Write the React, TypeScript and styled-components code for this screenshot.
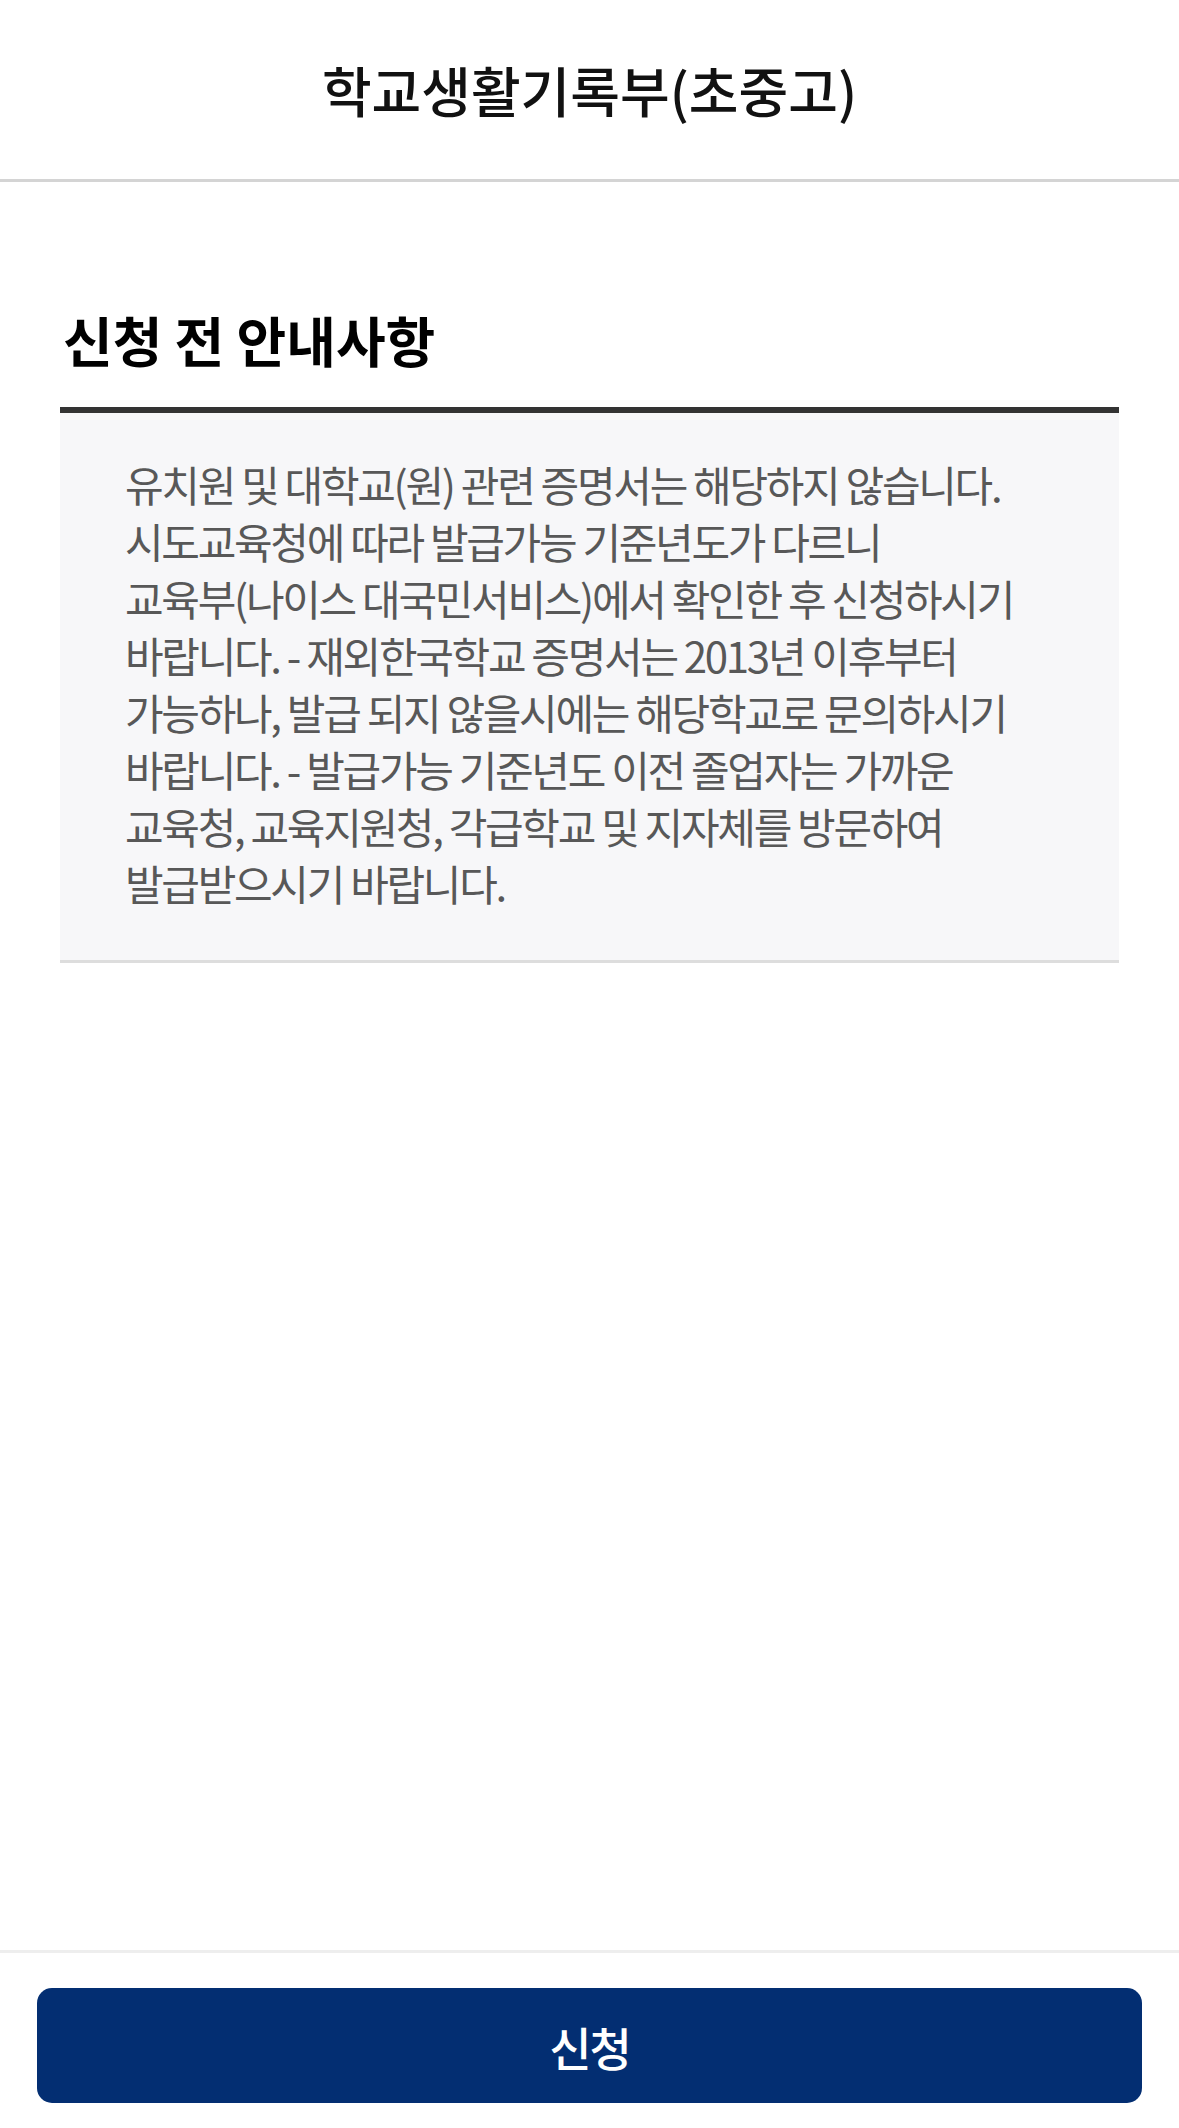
import React from 'react'
import styled, { createGlobalStyle } from 'styled-components'

const GlobalStyle = createGlobalStyle`
  html, body {
    margin: 0;
    padding: 0;
    background: #ffffff;
  }
  body {
    font-family: 'Noto Sans CJK KR', 'Noto Sans', sans-serif;
    color: #111111;
  }
  * {
    box-sizing: border-box;
  }
`

const Page = styled.div`
  min-height: 100vh;
  display: flex;
  flex-direction: column;
`

const Header = styled.header`
  height: 182px;
  display: flex;
  align-items: center;
  justify-content: center;
  border-bottom: 3px solid #d4d4d4;
`

const HeaderTitle = styled.h1`
  margin: 0;
  font-size: 54px;
  font-weight: 500;
  color: #111111;
`

const Content = styled.main`
  flex: 1;
  padding: 120px 60px 0;
`

const SectionTitle = styled.h2`
  margin: 0 0 29px 3px;
  font-size: 54px;
  line-height: 76px;
  font-weight: 700;
  color: #000000;
  letter-spacing: 0;
`

const NoticeBox = styled.div`
  border-top: 6px solid #333333;
  border-bottom: 3px solid #dddddd;
  background: #f7f7f9;
  padding: 42px 64px 49px 65px;
`

const NoticeText = styled.p`
  margin: 0;
  font-size: 42px;
  line-height: 57px;
  color: #585858;
  letter-spacing: -2.3px;
  word-break: keep-all;
`

const Footer = styled.footer`
  border-top: 3px solid #eeeeee;
  padding: 35px 37px 25px;
`

const SubmitButton = styled.button`
  width: 100%;
  height: 115px;
  border: none;
  border-radius: 15px;
  background: #032e72;
  color: #ffffff;
  font-family: inherit;
  font-size: 46px;
  font-weight: 500;
  letter-spacing: -2px;
  cursor: pointer;
`

// word joiner keeps "교육부(나이스" together when the line wraps
const WJ = '\u2060'

const notice = `유치원 및 대학교${WJ}(원) 관련 증명서는 해당하지 않습니다. 시도교육청에 따라 발급가능 기준년도가 다르니 교육부${WJ}(나이스 대국민서비스)에서 확인한 후 신청하시기 바랍니다. - 재외한국학교 증명서는 2013년 이후부터 가능하나, 발급 되지 않을시에는 해당학교로 문의하시기 바랍니다. - 발급가능 기준년도 이전 졸업자는 가까운 교육청, 교육지원청, 각급학교 및 지자체를 방문하여 발급받으시기 바랍니다.`

const App: React.FC = () => {
  return (
    <>
      <GlobalStyle />
      <Page>
        <Header>
          <HeaderTitle>학교생활기록부(초중고)</HeaderTitle>
        </Header>
        <Content>
          <SectionTitle>신청 전 안내사항</SectionTitle>
          <NoticeBox>
            <NoticeText>{notice}</NoticeText>
          </NoticeBox>
        </Content>
        <Footer>
          <SubmitButton type="button">신청</SubmitButton>
        </Footer>
      </Page>
    </>
  )
}

export default App
